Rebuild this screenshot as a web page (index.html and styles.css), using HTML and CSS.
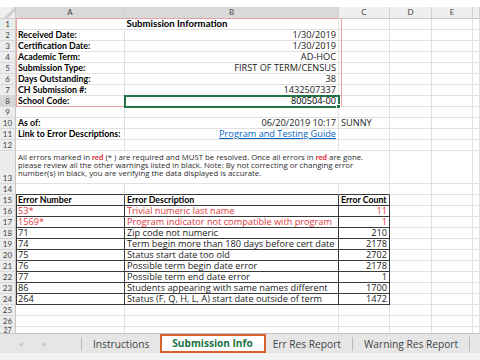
FILE: index.html
```html
<!DOCTYPE html>
<html lang="en">
<head>
  <meta charset="UTF-8" />
  <title>Submission Info</title>
  <link rel="stylesheet" href="styles.css">
</head>
<body>
  <div class="top-strip"></div>

  <div class="sheet">
    <div class="row col-heads">
      <div class="corner"></div>
      <div class="ch sel">A</div>
      <div class="ch sel">B</div>
      <div class="ch">C</div>
      <div class="ch">D</div>
      <div class="ch">E</div>
      <div class="ch"></div>
    </div>

    <div class="info-block">
      <div class="row">
        <div class="rh">1</div>
        <div class="cell span2 bold title center">Submission Information</div>
        <div class="cell"></div><div class="cell"></div><div class="cell"></div><div class="cell"></div>
      </div>
      <div class="row">
        <div class="rh">2</div>
        <div class="cell bold">Received Date:</div>
        <div class="cell right">1/30/2019</div>
        <div class="cell"></div><div class="cell"></div><div class="cell"></div><div class="cell"></div>
      </div>
      <div class="row">
        <div class="rh">3</div>
        <div class="cell bold">Certification Date:</div>
        <div class="cell right">1/30/2019</div>
        <div class="cell"></div><div class="cell"></div><div class="cell"></div><div class="cell"></div>
      </div>
      <div class="row">
        <div class="rh">4</div>
        <div class="cell bold">Academic Term:</div>
        <div class="cell right">AD-HOC</div>
        <div class="cell"></div><div class="cell"></div><div class="cell"></div><div class="cell"></div>
      </div>
      <div class="row">
        <div class="rh">5</div>
        <div class="cell bold">Submission Type:</div>
        <div class="cell right">FIRST OF TERM/CENSUS</div>
        <div class="cell"></div><div class="cell"></div><div class="cell"></div><div class="cell"></div>
      </div>
      <div class="row">
        <div class="rh">6</div>
        <div class="cell bold">Days Outstanding:</div>
        <div class="cell right">38</div>
        <div class="cell"></div><div class="cell"></div><div class="cell"></div><div class="cell"></div>
      </div>
      <div class="row">
        <div class="rh">7</div>
        <div class="cell bold">CH Submission #:</div>
        <div class="cell right">1432507337</div>
        <div class="cell"></div><div class="cell"></div><div class="cell"></div><div class="cell"></div>
      </div>
      <div class="row">
        <div class="rh active">8</div>
        <div class="cell bold">School Code:</div>
        <div class="cell right selected">800504-00<span class="handle"></span></div>
        <div class="cell"></div><div class="cell"></div><div class="cell"></div><div class="cell"></div>
      </div>
    </div>

    <div class="row">
      <div class="rh">9</div>
      <div class="cell"></div><div class="cell"></div><div class="cell"></div><div class="cell"></div><div class="cell"></div><div class="cell"></div>
    </div>
    <div class="row">
      <div class="rh">10</div>
      <div class="cell bold">As of:</div>
      <div class="cell right">06/20/2019 10:17</div>
      <div class="cell">SUNNY</div>
      <div class="cell"></div><div class="cell"></div><div class="cell"></div>
    </div>
    <div class="row">
      <div class="rh">11</div>
      <div class="cell bold">Link to Error Descriptions:</div>
      <div class="cell right"><a class="link" href="#">Program and Testing Guide</a></div>
      <div class="cell"></div><div class="cell"></div><div class="cell"></div><div class="cell"></div>
    </div>
    <div class="row">
      <div class="rh">12</div>
      <div class="cell"></div><div class="cell"></div><div class="cell"></div><div class="cell"></div><div class="cell"></div><div class="cell"></div>
    </div>
    <div class="row tall">
      <div class="rh bottom">13</div>
      <div class="cell span3 note">
        All errors marked in <b class="red-word">red</b> (* ) are required and MUST be resolved. Once all errors in <b class="red-word">red</b> are gone.<br>
        please review all the other warnings listed in black. Note: By not correcting or changing error<br>
        number(s) in black, you are verifying the data displayed is accurate.
      </div>
      <div class="cell"></div><div class="cell"></div><div class="cell"></div>
    </div>
    <div class="row">
      <div class="rh">14</div>
      <div class="cell edge"></div><div class="cell edge"></div><div class="cell edge"></div>
      <div class="cell"></div><div class="cell"></div><div class="cell"></div>
    </div>

    <div class="row err">
      <div class="rh">15</div>
      <div class="cell bold">Error Number</div>
      <div class="cell bold">Error Description</div>
      <div class="cell bold">Error Count</div>
      <div class="cell"></div><div class="cell"></div><div class="cell"></div>
    </div>
    <div class="row err red">
      <div class="rh">16</div>
      <div class="cell">53*</div>
      <div class="cell">Trivial numeric last name</div>
      <div class="cell right">11</div>
      <div class="cell"></div><div class="cell"></div><div class="cell"></div>
    </div>
    <div class="row err red">
      <div class="rh">17</div>
      <div class="cell">1569*</div>
      <div class="cell">Program indicator not compatible with program</div>
      <div class="cell right">1</div>
      <div class="cell"></div><div class="cell"></div><div class="cell"></div>
    </div>
    <div class="row err">
      <div class="rh">18</div>
      <div class="cell">71</div>
      <div class="cell">Zip code not numeric</div>
      <div class="cell right">210</div>
      <div class="cell"></div><div class="cell"></div><div class="cell"></div>
    </div>
    <div class="row err">
      <div class="rh">19</div>
      <div class="cell">74</div>
      <div class="cell">Term begin more than 180 days before cert date</div>
      <div class="cell right">2178</div>
      <div class="cell"></div><div class="cell"></div><div class="cell"></div>
    </div>
    <div class="row err">
      <div class="rh">20</div>
      <div class="cell">75</div>
      <div class="cell">Status start date too old</div>
      <div class="cell right">2702</div>
      <div class="cell"></div><div class="cell"></div><div class="cell"></div>
    </div>
    <div class="row err">
      <div class="rh">21</div>
      <div class="cell">76</div>
      <div class="cell">Possible term begin date error</div>
      <div class="cell right">2178</div>
      <div class="cell"></div><div class="cell"></div><div class="cell"></div>
    </div>
    <div class="row err">
      <div class="rh">22</div>
      <div class="cell">77</div>
      <div class="cell">Possible term end date error</div>
      <div class="cell right">1</div>
      <div class="cell"></div><div class="cell"></div><div class="cell"></div>
    </div>
    <div class="row err">
      <div class="rh">23</div>
      <div class="cell">86</div>
      <div class="cell">Students appearing with same names different</div>
      <div class="cell right">1700</div>
      <div class="cell"></div><div class="cell"></div><div class="cell"></div>
    </div>
    <div class="row err">
      <div class="rh">24</div>
      <div class="cell">264</div>
      <div class="cell">Status (F, Q, H, L, A) start date outside of term</div>
      <div class="cell right">1472</div>
      <div class="cell"></div><div class="cell"></div><div class="cell"></div>
    </div>

    <div class="row">
      <div class="rh">25</div>
      <div class="cell"></div><div class="cell"></div><div class="cell"></div><div class="cell"></div><div class="cell"></div><div class="cell"></div>
    </div>
    <div class="row">
      <div class="rh">26</div>
      <div class="cell"></div><div class="cell"></div><div class="cell"></div><div class="cell"></div><div class="cell"></div><div class="cell"></div>
    </div>
    <div class="row last">
      <div class="rh">27</div>
      <div class="cell"></div><div class="cell"></div><div class="cell"></div><div class="cell"></div><div class="cell"></div><div class="cell"></div>
    </div>
  </div>

  <div class="tab-bar">
    <span class="nav">&#9664;</span>
    <span class="nav">&#9654;</span>
    <span class="tab-sep first"></span>
    <span class="tab">Instructions</span>
    <span class="tab current">Submission Info</span>
    <span class="tab after-current">Err Res Report</span>
    <span class="tab-sep"></span>
    <span class="tab">Warning Res Report</span>
    <span class="tab-sep"></span>
  </div>
  <div class="status-bar"></div>
</body>
</html>
```

FILE: styles.css
```css
* {
  margin: 0;
  padding: 0;
  box-sizing: border-box;
}

body {
  width: 480px;
  height: 360px;
  overflow: hidden;
  display: flex;
  flex-direction: column;
  background: #fff;
  color: #1a1a1a;
  font-family: "Open Sans", "Liberation Sans", sans-serif;
  font-size: 9.2px;
}

.top-strip {
  height: 7px;
  flex: none;
}

.sheet {
  height: 326px;
  flex: none;
  overflow: hidden;
}

.row {
  display: grid;
  grid-template-columns: 16px 109px 214px 51px 42px 41px 1fr;
  height: 11px;
}

.row.tall {
  height: 33px;
}

.col-heads {
  height: 12px;
  background: #efefef;
  border-bottom: 1px solid #c8c8c8;
}

.corner {
  border-right: 1px solid #c8c8c8;
  background: linear-gradient(135deg, transparent 55%, #cfcfcf 56%, #cfcfcf 70%, transparent 71%);
}

.ch {
  border-right: 1px solid #d0d0d0;
  text-align: center;
  color: #444;
  font-family: Lato, sans-serif;
  font-size: 8px;
  line-height: 11px;
}

.ch.sel {
  background: #d9d9d9;
  border-bottom: 1px solid #e6a3a3;
}

.rh {
  background: #ececec;
  border-right: 1px solid #c6c6c6;
  border-bottom: 1px solid #d8d8d8;
  text-align: center;
  color: #444;
  font-family: Lato, sans-serif;
  font-size: 8px;
  line-height: 10px;
}

.rh.active {
  background: #d6d6d6;
}

.rh.bottom {
  display: flex;
  align-items: flex-end;
  justify-content: center;
}

.last .rh {
  font-size: 7px;
  line-height: 7px;
}

.cell {
  border-right: 1px solid #e1e1e1;
  border-bottom: 1px solid #e1e1e1;
  padding: 0 2px;
  line-height: 10px;
  white-space: nowrap;
}

.span2 {
  grid-column: span 2;
}

.span3 {
  grid-column: span 3;
}

.bold {
  font-family: Lato, sans-serif;
  font-size: 8.8px;
  font-weight: 700;
  color: #000;
}

.title {
  font-size: 9.6px;
}

.center {
  text-align: center;
}

.right {
  text-align: right;
}

.info-block {
  position: relative;

  &::after {
    content: "";
    position: absolute;
    left: 16px;
    top: -1px;
    width: 324px;
    bottom: 0;
    border: 1px solid #e8a4a4;
    border-top: none;
    pointer-events: none;
  }
}

.selected {
  position: relative;
  color: #000;
  outline: 2px solid #217346;
  outline-offset: -1px;
  z-index: 1;
}

.handle {
  position: absolute;
  right: -3px;
  bottom: -3px;
  width: 5px;
  height: 5px;
  background: #217346;
  border: 1px solid #fff;
  z-index: 2;
}

.link {
  color: #0563c1;
  text-decoration: underline;
}

.note {
  white-space: normal;
  font-size: 7.8px;
  line-height: 7.8px;
  padding-top: 3px;
  color: #2a2a2a;
}

.red-word {
  font-family: Lato, sans-serif;
  color: #e0292f;
}

.edge {
  border-bottom-color: #3a3a3a;
}

.err .cell:nth-child(-n+4) {
  border-right-color: #3a3a3a;
  border-bottom-color: #3a3a3a;
}

.err .cell:nth-child(2) {
  box-shadow: inset 1px 0 #3a3a3a;
}

.err.red .cell {
  color: #e0393e;
}

.tab-bar {
  height: 20px;
  flex: none;
  display: flex;
  align-items: center;
  background: #e6e6e6;
  border-top: 1px solid #c4c4c4;
  color: #444;
  font-size: 10.2px;
}

.nav {
  color: #c8c8c8;
  font-size: 6px;
  width: 5px;
  margin-left: 18px;
}

.nav + .nav {
  margin-left: 19px;
}

.tab-sep {
  width: 1px;
  height: 14px;
  background: #b8b8b8;
}

.tab-sep.first {
  margin-left: 34px;
}

.tab {
  padding: 0 11px;
}

.tab.current {
  height: 19px;
  line-height: 15px;
  padding: 0 11px 0 10px;
  background: #fff;
  color: #217346;
  font-size: 10.1px;
  font-weight: 700;
  border: 2px solid #d8632c;
}

.tab.after-current {
  padding-left: 7px;
}

.status-bar {
  flex: 1;
  background: #f3f3f3;
}
```
